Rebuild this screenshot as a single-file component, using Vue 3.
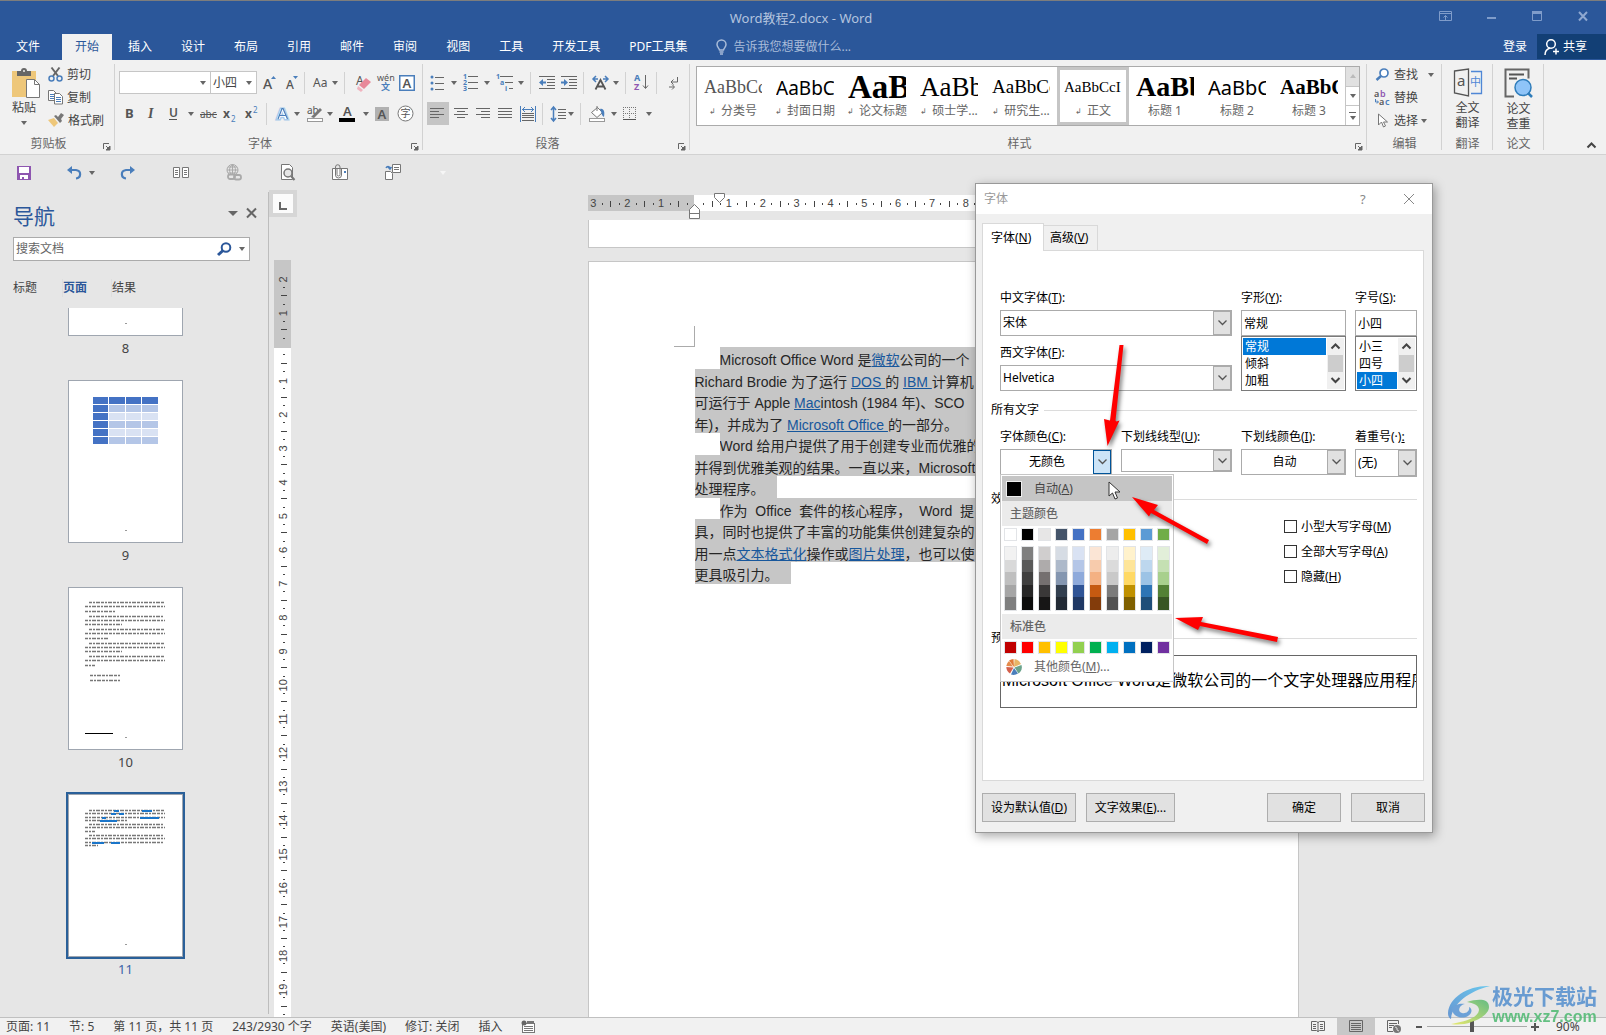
<script setup>
import { h, ref } from 'vue'

const G = '#666'
const B = '#4a7ebb'
const ln = (d, c = G, w = 1) => `<path d="${d}" fill="none" stroke="${c}" stroke-width="${w}"/>`
const tx = (x, y, s, t, extra = '') =>
  `<text x="${x}" y="${y}" font-size="${s}" font-family="Noto Sans,Noto Sans CJK SC,sans-serif" fill="#555" ${extra}>${t}</text>`

const icons = {
  paste: [29, 31, `<rect x="0" y="3" width="24" height="26" fill="#eec77a"/><path d="M5 3h4a3 3 0 0 1 6 0h4v5H5z" fill="#666"/><circle cx="12" cy="3" r="1" fill="#eee"/><path d="M14.500 11.500h8l5 5v13h-13z" fill="#fff" stroke="#777"/>${ln('M22.500 11.500v5h5', '#777')}`],
  cut: [15, 15, `${ln('M3.500 0.500L10 9M11.500 0.500L5 9', '#666', 2)}<circle cx="3.500" cy="11.500" r="2.500" fill="none" stroke="${B}" stroke-width="1.500"/><circle cx="11.500" cy="11.500" r="2.500" fill="none" stroke="${B}" stroke-width="1.500"/>`],
  copy: [15, 15, `<path d="M.5.500h5l3 3v7h-8z" fill="#fff" stroke="#777"/>${ln('M2 4.500h4M2 6.500h4M2 8.500h4', B)}<path d="M6.500 3.500h5l3 3v7.500h-8z" fill="#fff" stroke="#777"/>${ln('M8 7.500h5M8 9.500h5M8 11.500h5', B)}`],
  brush: [16, 15, `<path d="M0 7l6-2 4 5-4 4z" fill="#eec77a"/><path d="M6 3l2-1 2 2 3-4 3 2-3 4 1 2-2 2z" fill="#777"/>`],
  growA: [14, 16, `${tx(1, 14, 14, 'A', 'font-weight="500"')}<path d="M9 4l2.500-3L14 4z" fill="${B}"/>`],
  shrinkA: [14, 16, `${tx(1, 14, 12, 'A', 'font-weight="500"')}<path d="M8 1l2.500 3L13 1z" fill="${B}"/>`],
  aa: [16, 16, tx(0, 12, 12, 'Aa')],
  eraser: [18, 18, `${tx(3, 11, 12, 'A')}<path d="M6 11l7-7 5 4-7 7z" fill="#e8899a"/><path d="M5 12l5 4-2 2-4-3z" fill="#f1b4bf"/>`],
  wen: [17, 17, `${tx(0, 7, 9, 'wén')}<text x="4" y="16" font-size="9" font-weight="700" font-family="Noto Sans CJK SC,sans-serif" fill="${B}">文</text>`],
  boxA: [16, 16, `<rect x=".75" y=".75" width="14.500" height="14.500" fill="#fff" stroke="${B}" stroke-width="1.500"/>${tx(3.5, 13, 13, 'A', 'font-weight="600"')}`],
  bold: [14, 16, tx(3, 12, 13, 'B', 'font-weight="700"')],
  italic: [14, 16, `<text x="4" y="12" font-size="14" font-family="Liberation Serif,serif" font-style="italic" font-weight="700" fill="#555">I</text>`],
  underline: [14, 16, `${tx(3, 11, 12, 'U', 'font-weight="600"')}${ln('M3 13.500h8', '#555')}`],
  strike: [17, 16, `${tx(0, 12, 10, 'abc')}${ln('M0 8.500h17', '#555')}`],
  sub: [14, 16, `${tx(1, 12, 12, 'x', 'font-weight="700"')}<text x="9" y="16" font-size="8" font-family="Noto Sans,sans-serif" fill="${B}">2</text>`],
  sup: [14, 16, `${tx(1, 12, 12, 'x', 'font-weight="700"')}<text x="9" y="7" font-size="8" font-family="Noto Sans,sans-serif" fill="${B}">2</text>`],
  glowA: [15, 16, `<text x="2" y="13" font-size="15" font-weight="700" font-family="Noto Sans,sans-serif" fill="#fff" stroke="#a9cbea" stroke-width="3" paint-order="stroke">A</text><path d="M3 13L7 2.500h1L12.500 13M4.500 9.500h6" fill="none" stroke="${B}" stroke-width="1.200"/>`],
  highlight: [18, 18, `${tx(1, 9, 10, 'ab')}<path d="M5 12l9-9 2 2-8 8z" fill="#777"/><rect x="1.500" y="13.500" width="15" height="3" fill="#fff" stroke="#999"/>`],
  colorA: [17, 18, `${tx(4, 11, 13, 'A', 'font-weight="600"')}<rect x="0" y="13" width="16" height="4" fill="#000"/>`],
  shadeA: [14, 16, `<rect x="0" y="1" width="14" height="14" fill="#b1b1b1"/>${tx(2.5, 13, 13, 'A', 'font-weight="600"')}`],
  circleZi: [17, 17, `<circle cx="8.500" cy="8.500" r="7.500" fill="#fff" stroke="#777"/><text x="3.500" y="12" font-size="10" font-family="Noto Sans CJK SC,sans-serif" fill="#555">字</text>`],
  bullets: [14, 16, `<circle cx="2" cy="2" r="1.500" fill="${B}"/><circle cx="2" cy="8" r="1.500" fill="${B}"/><circle cx="2" cy="14" r="1.500" fill="${B}"/>${ln('M5 2.500h9M5 8.500h9M5 14.500h9')}`],
  numbers: [15, 17, `<g font-size="7" font-weight="700" font-family="Noto Sans,sans-serif" fill="${B}"><text x="0" y="5">1</text><text x="0" y="11">2</text><text x="0" y="17">3</text></g>${ln('M5 2.500h10M5 8.500h10M5 14.500h10')}`],
  multi: [17, 17, `<g font-size="7" font-weight="700" font-family="Noto Sans,sans-serif" fill="${B}"><text x="0" y="5">1</text><text x="4" y="11">a</text><text x="9" y="17">i</text></g>${ln('M4 2.500h13M9 8.500h8M13 14.500h4')}`],
  outdent: [16, 15, `${ln('M0 1.500h16M8 4.500h8M8 7.500h8M8 10.500h8M0 13.500h16')}<path d="M0 7.500l4-3.500v2.500h3v2H4V11z" fill="${B}"/>`],
  indent: [16, 15, `${ln('M0 1.500h16M8 4.500h8M8 7.500h8M8 10.500h8M0 13.500h16')}<path d="M7 7.500L3 4v2.500H0v2h3V11z" fill="${B}"/>`],
  scaleA: [17, 16, `${ln('M3.500 14.500L8.500 5l5 9.500M5.500 11.500h6', '#555', 1.800)}${ln('M1 4h5M4 1L1 4l3 3M16 4h-5M13 1l3 3-3 3', B, 1.5)}`],
  sort: [15, 17, `<text x="0" y="7" font-size="9" font-weight="700" font-family="Noto Sans,sans-serif" fill="${B}">A</text><text x="0" y="16" font-size="9" font-weight="700" font-family="Noto Sans,sans-serif" fill="#8e56b0">Z</text>${ln('M11.500 1v13M9 11.500l2.500 3 2.500-3')}`],
  marks: [14, 16, `${ln('M12.500 2v5H6M8.500 4.500L6 7l2.500 2.500M4 12h5M7 9.500L9.500 12 7 14.500')}`],
  left: [14, 13, ln('M0 1.500h14M0 4.500h9M0 7.500h14M0 10.500h9')],
  center: [14, 13, ln('M0 1.500h14M3 4.500h8M0 7.500h14M3 10.500h8')],
  right: [14, 13, ln('M0 1.500h14M5 4.500h9M0 7.500h14M5 10.500h9')],
  justify: [14, 13, ln('M0 1.500h14M0 4.500h14M0 7.500h14M0 10.500h14')],
  distribute: [16, 16, `${ln('M.5 0v16M15.500 0v16', B)}${ln('M2 3.500h12M5 1L2.500 3.500 5 6M11 1l2.500 2.500L11 6', B)}${ln('M2 7.500h12M2 9.500h12M2 11.500h12M2 14.500h12')}`],
  spacing: [15, 16, `${ln('M2.500 1v14M0 4l2.500-3L5 4M0 12l2.500 3L5 12', B, 1.5)}${ln('M7 3.500h8M7 6.500h8M7 9.500h8M7 12.500h8')}`],
  bucket: [17, 17, `<path d="M2.500 7.500l6-5 5 5-5.500 5z" fill="#fff" stroke="#777"/>${ln('M8 1v5', '#777')}<path d="M11 4c4-1 5 3 4 8-3-2-2-4-3-5z" fill="${B}"/><rect x=".5" y="13.500" width="15" height="3" fill="#fff" stroke="#999"/>`],
  borders: [14, 14, `<path d="M.5 0v13M6.500 0v13M12.500 0v13M0 .5h13M0 6.500h13" fill="none" stroke="#777" stroke-dasharray="1 1"/>${ln('M0 12.500h13', '#555')}`],
  find: [14, 13, `<circle cx="8.500" cy="5" r="4" fill="#fff" stroke="${B}" stroke-width="1.700"/>${ln('M5.500 8L1 12', B, 2.5)}`],
  replace: [17, 16, `${tx(0, 7, 9, 'a', 'font-weight="600"')}<text x="6" y="7" font-size="9" font-weight="600" font-family="Noto Sans,sans-serif" fill="#8e56b0">b</text>${tx(5, 15, 9, 'a', 'font-weight="600"')}<text x="11" y="15" font-size="9" font-weight="600" font-family="Noto Sans,sans-serif" fill="${B}">c</text>${ln('M1.500 9v3H4M3 10.500L4.500 12 3 13.500', B)}`],
  select: [12, 15, `<path d="M2 1v11l3-3 2 5 2-1-2-4h4z" fill="#fff" stroke="#777"/>`],
  translate: [29, 29, `<path d="M1.500 3L15.500 1v27L1.500 25z" fill="none" stroke="#555" stroke-width="1.300"/><text x="4" y="18" font-size="15" font-family="Noto Sans,sans-serif" fill="#555">a</text>${ln('M18 3.500h10.500v22H18', '#4f87d6', 1.3)}<text x="17" y="18" font-size="11" font-family="Noto Sans CJK SC,sans-serif" fill="#4f87d6">中</text>`],
  thesis: [29, 30, `<path d="M10 28.500H1.500V1.500h23v9" fill="none" stroke="#666" stroke-width="2"/>${ln('M5 6.500h15M5 10.500h8', '#555', 2)}<circle cx="19" cy="19.500" r="8" fill="#8fc4f8" stroke="#2e7cba" stroke-width="1.500"/>${ln('M24 25l4 4', '#2e7cba', 2.5)}`],
  launcher: [8, 8, `${ln('M.5 6V.5H6')}<path d="M7 3v4H3zM3 3l3 3" fill="${G}" stroke="${G}"/>`],
  save: [14, 14, `<path d="M0 0h14v14H0z" fill="#8e56b0"/><path d="M2 1h10v6H2zM3 9h8v4H3z" fill="#fff"/><path d="M5 11h2v2H5z" fill="#8e56b0"/>`],
  undo: [15, 14, `${ln('M3 4h6c6 1 5 8 0 8.500', B, 2.2)}<path d="M0 4l5-4v8z" fill="${B}"/>`],
  redo: [15, 14, `${ln('M12 4H6C0 5 1 12 6 12.500', B, 2.2)}<path d="M15 4l-5-4v8z" fill="${B}"/>`],
  pages: [17, 12, `<path d="M.5.500h6v10h-6zM9.500.500h6v10h-6z" fill="#fff" stroke="#777"/>${ln('M2 3.500h3M2 5.500h3M2 7.500h3M11 3.500h3M11 5.500h3M11 7.500h3', '#777')}`],
  globe: [16, 17, `<circle cx="6.500" cy="6" r="5.500" fill="none" stroke="#aaa"/>${ln('M1 6h11M6.500.500v11M2 3h9M2 9h9', '#aaa')}<path d="M6.500.500c-4 3-4 8 0 11M6.500.500c4 3 4 8 0 11" fill="none" stroke="#aaa"/><rect x="2" y="10.500" width="7" height="4.500" rx="2" fill="#e6e6e6" stroke="#aaa" stroke-width="1.800"/><rect x="8" y="11" width="7" height="4.500" rx="2" fill="none" stroke="#aaa" stroke-width="1.800"/>`],
  preview: [16, 17, `<path d="M2.500.500h8l3 3v12h-11z" fill="#fff" stroke="#777"/><circle cx="9" cy="9" r="4" fill="#e6e6e6" stroke="#777" stroke-width="1.500"/>${ln('M12 12l3.500 4', '#777', 2)}`],
  attach: [17, 15, `<path d="M.5 3.500h15v11H.500z" fill="#fff" stroke="#777"/><rect x="12" y="6" width="2" height="2" fill="${B}"/><path d="M5 3v6.500a1.500 1.500 0 0 0 3 0V2a2 2 0 0 0-4.500 0v8a3 3 0 0 0 6 0V3" fill="none" stroke="#777"/>`],
  compare: [17, 17, `<path d="M.5 7.500h5l2 2v6h-7zM7.500.500h8v8h-8z" fill="#fff" stroke="#777"/>${ln('M9 3.500h5M9 5.500h5', '#777')}${ln('M1 4c1-2 3-2 4 0M3 3l2 2 1.500-2', B, 1.5)}`],
  bulb: [11, 15, `<path d="M3.500 10C3 8 1 7 1 4.500a4.500 4.500 0 0 1 9 0C10 7 8 8 7.500 10z" fill="none" stroke="#a9bcd9" stroke-width="1.500"/>${ln('M3.500 12h4M4 14h3', '#a9bcd9', 1.5)}`],
  person: [16, 16, `<circle cx="7" cy="5" r="4.300" fill="none" stroke="#fff" stroke-width="1.500"/>${ln('M1 16c0-4 2-6 5-7M9 12.500h6M12 9.500v6', '#fff', 1.5)}`],
  ribbonOpt: [13, 11, `${ln('M.5.500h12v9H.500zM1 2.500h11M6.500 9V4.500M4.500 6.500l2-2 2 2', '#7f9cca')}`],
  min: [9, 11, ln('M0 7h9', '#7f9cca', 2)],
  max: [10, 11, `${ln('M.5 1h9v8.500h-9z', '#7f9cca')}${ln('M0 1.500h10', '#7f9cca', 3)}`],
  close: [10, 11, ln('M1 1l8 8.500M9 1L1 9.500', '#8fa8d0', 2)],
  search: [15, 14, `<circle cx="9" cy="5.500" r="4.300" fill="none" stroke="#2b579a" stroke-width="2"/>${ln('M6 8.500l-5 4.500', '#2b579a', 3)}`],
  navClose: [11, 10, ln('M1 .5l9 9M10 .5l-9 9', '#666', 2)],
  macro: [14, 13, `<rect x="1.500" y="3.500" width="12" height="9" fill="#fff" stroke="#777"/>${ln('M3 6.500h9M3 8.500h9M3 10.500h9', '#777')}<rect x="6" y="1" width="7" height="3" fill="#777"/><circle cx="3" cy="3" r="2.500" fill="#666"/>`],
  read: [14, 13, `${ln('M.5 1.500h5l1.500 1 1.500-1h5v9h-5l-1.500 1-1.500-1h-5zM7 2v10')}${ln('M2 4.500h3M2 6.500h3M2 8.500h3M9 4.500h3M9 6.500h3M9 8.500h3')}`],
  print: [14, 13, `${ln('M.5.500h13v11H.500zM2 3.500h10M2 5.500h10M2 7.500h10M2 9.500h10')}`],
  web: [14, 13, `${ln('M6 11.500H.500v-11h11V4M2 3.500h8M2 5.500h5M2 7.500h3')}<circle cx="10" cy="9" r="4" fill="#777"/>${ln('M8 7l2 1v2l2 1', '#ddd')}`],
  help: [10, 14, `<text x="1" y="12" font-size="13" font-family="Noto Sans,sans-serif" fill="#888">?</text>`],
  dlgClose: [12, 12, ln('M1 1l10 10M11 1L1 11', '#888')],
  chev: [9, 6, ln('M.5.500l4 4 4-4', '#555', 1.3)],
  up: [9, 7, ln('M.5 5.500l4-4 4 4', '#444', 2)],
  down: [9, 7, ln('M.5 1l4 4 4-4', '#444', 2)],
  wheel: [16, 16, `<path d="M8 8L3 1.500A8 8 0 0 1 7.500 0z" fill="#e07b39"/><path d="M8 8L8.500 0A8 8 0 0 1 15 5z" fill="#e8b566"/><path d="M8.500 8.500L15.500 6a8 8 0 0 1-3 8.500z" fill="#6aa38c"/><path d="M8 9l4 5.500a8 8 0 0 1-7 1z" fill="#4a7ebb"/><path d="M7.500 8.500L4 14.500A8 8 0 0 1 .3 8z" fill="#d4604c"/><path d="M7 7.500L.3 7A8 8 0 0 1 3 2z" fill="#e58a4a"/>`],
  pointer: [13, 20, `<path d="M1 1v14l3.500-3 2.500 6 2.500-1-2.500-6H12z" fill="#fff" stroke="#333"/>`],
}
const Ic = (p) => {
  const [w, hh, m] = icons[p.n]
  return h('svg', { width: w, height: hh, viewBox: `0 0 ${w} ${hh}`, 'aria-hidden': 'true', innerHTML: m })
}
Ic.props = ['n']

const tabs = ['插入', '设计', '布局', '引用', '邮件', '审阅', '视图', '工具', '开发工具', 'PDF工具集']
const sep = { sep: true }
const t = (i, w, a) => ({ i, w, a })
const font1 = [t('growA', 21), t('shrinkA', 17), sep, t('aa', 29, 1), sep, t('eraser', 22), t('wen', 20), t('boxA', 18)]
const font2 = [t('bold', 20), t('italic', 20), t('underline', 32, 1), t('strike', 20), t('sub', 20), t('sup', 20), sep, t('glowA', 29, 1), t('highlight', 31, 1), t('colorA', 34, 1), t('shadeA', 20), t('circleZi', 20)]
const para1 = [t('bullets', 31, 1), t('numbers', 31, 1), t('multi', 32, 1), sep, t('outdent', 20), t('indent', 20), sep, t('scaleA', 31, 1), sep, t('sort', 20), sep, t('marks', 24)]
const para2 = [{ ...t('left', 22), on: true }, t('center', 20), t('right', 20), t('justify', 20), t('distribute', 20), sep, t('spacing', 27, 1), sep, t('bucket', 32, 1), t('borders', 33, 1)]

const gallery = [
  { s: 'AaBbCc', n: '分类号', c: 'song', m: 1 },
  { s: 'AaBbCc', n: '封面日期', c: 'hei', m: 1 },
  { s: 'AaB', n: '论文标题', c: 'huge', m: 1 },
  { s: 'AaBb', n: '硕士学...', c: 'big', m: 1 },
  { s: 'AaBbCc', n: '研究生...', c: 'mid', m: 1 },
  { s: 'AaBbCcI', n: '正文', c: 'body', m: 1, on: 1 },
  { s: 'AaBb', n: '标题 1', c: 'h1' },
  { s: 'AaBbC', n: '标题 2', c: 'h2' },
  { s: 'AaBbC', n: '标题 3', c: 'h3' },
]
const qat = [['save', '保存'], ['undo', '撤消'], ['redo', '恢复'], ['pages', '多页'], ['globe', '超链接'], ['preview', '打印预览'], ['attach', '附件'], ['compare', '比较']]

const ticks = (from, to, origin, pitch) => {
  const out = []
  for (let q = from * 4; q <= to * 4; q++) {
    if (q === 0) continue
    const pos = origin + (q * pitch) / 4
    const kind = q % 4 === 0 ? 'n' : q % 2 === 0 ? 'l' : 'd'
    out.push({ pos, kind, v: Math.abs(q / 4) })
  }
  return out
}
const vTicks = ticks(-2, 19.75, 87, 33.83)
const hTicks = ticks(-3, 17, 107, 33.86)

const rows9 = [['', '', '', ''], ['', 'a', 'a', 'a'], ['', 'b', 'b', 'b'], ['', 'a', 'a', 'a'], ['', 'b', 'b', 'b'], ['', 'a', 'a', 'a']]
const tiny = (list) => list.map(([x, y, x2]) => ({ x, y, x2 }))
const lines10 = tiny([
  [21, 15, 97], [17, 19, 97], [17, 24, 47], [21, 29, 95], [17, 33, 97], [17, 37, 54], [21, 42, 97], [17, 46, 97], [17, 51, 41],
  [21, 56, 97], [17, 60, 97], [17, 64, 54], [21, 69, 97], [17, 73, 97], [17, 78, 27], [22, 88, 52], [22, 93, 52],
])
const lines11 = tiny([
  [21, 16, 97], [17, 19, 97], [17, 23, 97], [17, 26, 59], [21, 30, 95], [17, 33, 97], [17, 37, 27], [21, 41, 95], [17, 44, 97], [17, 48, 95], [17, 51, 30],
])
const links11 = tiny([[46, 16, 51], [74, 16, 84], [43, 19, 48], [51, 19, 56], [34, 23, 38], [72, 23, 91], [32, 26, 49], [24, 48, 36], [43, 48, 52]])

const theme = ['#ffffff', '#000000', '#e7e6e6', '#44546a', '#4472c4', '#ed7d31', '#a5a5a5', '#ffc000', '#5b9bd5', '#70ad47']
const shades = [
  ['#f2f2f2', '#d9d9d9', '#bfbfbf', '#a6a6a6', '#7f7f7f'],
  ['#7f7f7f', '#595959', '#3f3f3f', '#262626', '#0c0c0c'],
  ['#d0cece', '#aeabab', '#757070', '#3a3838', '#171616'],
  ['#d6dce4', '#adb9ca', '#8496b0', '#323f4f', '#222a35'],
  ['#d9e2f3', '#b4c6e7', '#8eaadb', '#2f5496', '#1f3864'],
  ['#fbe5d5', '#f7cbac', '#f4b183', '#c55a11', '#833c0b'],
  ['#ededed', '#dbdbdb', '#c9c9c9', '#7b7b7b', '#525252'],
  ['#fff2cc', '#fee599', '#ffd965', '#bf9000', '#7f6000'],
  ['#deebf6', '#bdd7ee', '#9cc3e5', '#2e75b5', '#1e4e79'],
  ['#e2efd9', '#c5e0b3', '#a8d08d', '#538135', '#375623'],
]
const standard = ['#c00000', '#ff0000', '#ffc000', '#ffff00', '#92d050', '#00b050', '#00b0f0', '#0070c0', '#002060', '#7030a0']
const checks = [['小型大写字母', 'M'], ['全部大写字母', 'A'], ['隐藏', 'H']]
const zoom = ref(90)
</script>

<template>
  <div class="app">
    <header class="top">
      <div class="titlebar">
        <span class="title">Word教程2.docx - Word</span>
        <div class="winbtns">
          <button aria-label="功能区显示选项"><Ic n="ribbonOpt" /></button>
          <button aria-label="最小化"><Ic n="min" /></button>
          <button aria-label="最大化"><Ic n="max" /></button>
          <button aria-label="关闭"><Ic n="close" /></button>
        </div>
      </div>
      <nav class="tabs">
        <button class="file">文件</button>
        <button class="active">开始</button>
        <button v-for="x in tabs" :key="x">{{ x }}</button>
        <button class="tell"><Ic n="bulb" />告诉我您想要做什么...</button>
        <span class="grow"></span>
        <button class="login">登录</button>
        <button class="share"><Ic n="person" />共享</button>
      </nav>
    </header>

    <section class="ribbon">
      <div class="group clip">
        <div class="content">
          <button class="paste"><Ic n="paste" /><span>粘贴</span><i class="arr"></i></button>
          <div class="stack">
            <button><Ic n="cut" />剪切</button>
            <button><Ic n="copy" />复制</button>
            <button><Ic n="brush" />格式刷</button>
          </div>
        </div>
        <div class="label"><span>剪贴板</span><Ic n="launcher" /></div>
      </div>

      <div class="group fontg">
        <div class="content rows">
          <div class="row">
            <button class="combo wide" aria-label="字体"><i class="arr"></i></button>
            <button class="combo" aria-label="字号">小四<i class="arr"></i></button>
            <template v-for="(x, k) in font1" :key="k">
              <i v-if="x.sep" class="vsep"></i>
              <button v-else class="tool" :style="{ width: x.w + 'px' }" :aria-label="x.i"><Ic :n="x.i" /><i v-if="x.a" class="arr"></i></button>
            </template>
          </div>
          <div class="row">
            <template v-for="(x, k) in font2" :key="k">
              <i v-if="x.sep" class="vsep"></i>
              <button v-else class="tool" :style="{ width: x.w + 'px' }" :aria-label="x.i"><Ic :n="x.i" /><i v-if="x.a" class="arr"></i></button>
            </template>
          </div>
        </div>
        <div class="label"><span>字体</span><Ic n="launcher" /></div>
      </div>

      <div class="group parag">
        <div class="content rows">
          <div v-for="(r, j) in [para1, para2]" :key="j" class="row">
            <template v-for="(x, k) in r" :key="k">
              <i v-if="x.sep" class="vsep"></i>
              <button v-else class="tool" :class="{ on: x.on }" :style="{ width: x.w + 'px' }" :aria-label="x.i"><Ic :n="x.i" /><i v-if="x.a" class="arr"></i></button>
            </template>
          </div>
        </div>
        <div class="label"><span>段落</span><Ic n="launcher" /></div>
      </div>

      <div class="group styles">
        <div class="content">
          <div class="gallery">
            <button v-for="g in gallery" :key="g.n" class="style" :class="{ on: g.on }">
              <span class="sample" :class="g.c">{{ g.s }}</span>
              <span class="sname"><small v-if="g.m">↲</small>{{ g.n }}</span>
            </button>
            <div class="gscroll">
              <button class="dis" aria-label="上一行"><i class="arr upw"></i></button>
              <button aria-label="下一行"><i class="arr"></i></button>
              <button class="more" aria-label="其他"><i class="arr"></i></button>
            </div>
          </div>
        </div>
        <div class="label"><span>样式</span><Ic n="launcher" /></div>
      </div>

      <div class="group edit">
        <div class="content">
          <div class="stack">
            <button><Ic n="find" />查找<i class="arr far"></i></button>
            <button><Ic n="replace" />替换</button>
            <button><Ic n="select" />选择<i class="arr"></i></button>
          </div>
        </div>
        <div class="label"><span>编辑</span></div>
      </div>
      <div class="group one">
        <div class="content"><button class="bigbtn"><Ic n="translate" /><span>全文<br />翻译</span></button></div>
        <div class="label"><span>翻译</span></div>
      </div>
      <div class="group one">
        <div class="content"><button class="bigbtn"><Ic n="thesis" /><span>论文<br />查重</span></button></div>
        <div class="label"><span>论文</span></div>
      </div>
      <div class="tail"><button aria-label="折叠功能区"><Ic n="up" /></button></div>
    </section>

    <div class="qat">
      <button v-for="q in qat" :key="q[0]" :aria-label="q[1]"><Ic :n="q[0]" /><i v-if="q[0] === 'undo'" class="arr"></i></button>
      <button class="custom" aria-label="自定义"><i class="arr"></i></button>
    </div>

    <main class="work">
      <aside class="nav">
        <div class="navhead"><h1>导航</h1><i class="arr big"></i><button aria-label="关闭导航"><Ic n="navClose" /></button></div>
        <div class="search"><input type="text" placeholder="搜索文档" aria-label="搜索文档" /><Ic n="search" /><i class="arr"></i></div>
        <div class="navtabs"><button>标题</button><button class="cur">页面</button><button>结果</button></div>
        <div class="thumbs">
          <figure>
            <div class="thumb cut"><i class="dot"></i></div>
            <figcaption>8</figcaption>
          </figure>
          <figure>
            <div class="thumb">
              <div class="mini"><template v-for="(r, i) in rows9" :key="i"><b v-for="(c, j) in r" :key="j" :class="c"></b></template></div>
              <i class="dot"></i>
            </div>
            <figcaption>9</figcaption>
          </figure>
          <figure>
            <div class="thumb">
              <svg width="113" height="161">
                <line v-for="(l, i) in lines10" :key="i" :x1="l.x - 1" :x2="l.x2 - 1" :y1="l.y - .5" :y2="l.y - .5" class="tinyline" />
                <path d="M16 145.500h28" stroke="#000" />
              </svg>
              <i class="dot"></i>
            </div>
            <figcaption>10</figcaption>
          </figure>
          <figure class="sel">
            <div class="thumb">
              <svg width="113" height="161">
                <line v-for="(l, i) in lines11" :key="i" :x1="l.x - 1" :x2="l.x2 - 1" :y1="l.y - .5" :y2="l.y - .5" class="tinyline" />
                <line v-for="(l, i) in links11" :key="'k' + i" :x1="l.x - 1" :x2="l.x2 - 1" :y1="l.y" :y2="l.y" stroke="#1a75c9" stroke-width="2" />
              </svg>
              <i class="dot"></i>
            </div>
            <figcaption>11</figcaption>
          </figure>
        </div>
      </aside>

      <div class="gutter">
        <button class="corner" aria-label="制表符"><i></i></button>
        <div class="vruler">
          <svg width="17" height="757">
            <rect width="17" height="88" fill="#c6c6c6" />
            <template v-for="(k, i) in vTicks" :key="i">
              <text v-if="k.kind === 'n'" class="rnum" text-anchor="middle" :transform="`translate(13 ${k.pos}) rotate(-90)`">{{ k.v }}</text>
              <rect v-else-if="k.kind === 'l'" x="7" :y="Math.round(k.pos) - 1" width="6" height="1" fill="#444" />
              <rect v-else x="9" :y="Math.round(k.pos) - 1" width="2" height="1" fill="#444" />
            </template>
          </svg>
        </div>
      </div>

      <div class="canvas">
        <div class="sheet">
          <div class="hruler">
            <svg width="711" height="26">
              <rect y="2" width="711" height="16" fill="#fff" />
              <rect y="2" width="106" height="16" fill="#c6c6c6" />
              <template v-for="(k, i) in hTicks" :key="i">
                <text v-if="k.kind === 'n'" class="rnum" text-anchor="middle" :x="k.pos" y="14">{{ k.v }}</text>
                <rect v-else-if="k.kind === 'l'" :x="Math.round(k.pos)" y="8" width="1" height="6" fill="#444" />
                <rect v-else :x="Math.round(k.pos)" y="10" width="1" height="2" fill="#444" />
              </template>
              <path d="M126.500.500h10v4l-5 5-5-5z" fill="#fff" stroke="#777" />
              <path d="M101.500 25.500v-9l5-5 5 5v9zM101.500 20.500h10" fill="#fff" stroke="#777" />
            </svg>
          </div>
          <div class="page prev"></div>
          <article class="page">
            <div class="bracket"></div>
            <div class="text">
              <p class="ind"><span class="full">Microsoft Office Word 是<a href="#">微软</a>公司的一个</span></p>
              <p><span class="full">Richard Brodie 为了运行 <a href="#">DOS </a>的 <a href="#">IBM </a>计算机</span></p>
              <p><span class="full">可运行于 Apple <a href="#">Mac</a>intosh (1984 年)、SCO</span></p>
              <p><span class="full">年)，并成为了 <a href="#">Microsoft Office </a>的一部分。</span></p>
              <p class="ind"><span class="full">Word 给用户提供了用于创建专业而优雅的</span></p>
              <p><span class="full">并得到优雅美观的结果。一直以来，Microsoft</span></p>
              <p><span>处理程序。</span></p>
              <p class="ind"><span class="full">作为&nbsp; Office&nbsp; 套件的核心程序，&nbsp; Word&nbsp; 提</span></p>
              <p><span class="full">具，同时也提供了丰富的功能集供创建复杂的</span></p>
              <p><span class="full">用一点<a href="#">文本格式化</a>操作或<a href="#">图片处理</a>，也可以使</span></p>
              <p><span>更具吸引力。</span></p>
            </div>
          </article>
        </div>
      </div>
    </main>

    <footer class="status">
      <span>页面: 11</span><span>节: 5</span><span>第 11 页，共 11 页</span><span>243/2930 个字</span><span>英语(美国)</span><span>修订: 关闭</span><span>插入</span><Ic n="macro" />
      <span class="grow"></span>
      <button class="view" aria-label="阅读视图"><Ic n="read" /></button>
      <button class="view cur" aria-label="页面视图"><Ic n="print" /></button>
      <button class="view" aria-label="Web 版式"><Ic n="web" /></button>
      <button class="pm" aria-label="缩小"><i></i></button>
      <input v-model="zoom" type="range" min="10" max="190" aria-label="缩放" />
      <button class="pm plus" aria-label="放大"><i></i></button>
      <span class="pct">{{ zoom }}%</span>
    </footer>

    <div class="dialog" role="dialog" aria-label="字体">
      <div class="dtitle"><span>字体</span><button aria-label="帮助"><Ic n="help" /></button><button aria-label="关闭对话框"><Ic n="dlgClose" /></button></div>
      <div class="dtabs"><button class="cur">字体(<u>N</u>)</button><button>高级(<u>V</u>)</button></div>
      <div class="panel">
        <div class="grid3">
          <div class="col">
            <label for="cn">中文字体(<u>T</u>):</label>
            <div class="sel-wrap"><select id="cn"><option>宋体</option></select><span class="drop"><Ic n="chev" /></span></div>
            <label for="en" class="second">西文字体(<u>F</u>):</label>
            <div class="sel-wrap"><select id="en"><option>Helvetica</option></select><span class="drop"><Ic n="chev" /></span></div>
          </div>
          <div class="col">
            <label for="st">字形(<u>Y</u>):</label>
            <input id="st" type="text" value="常规" />
            <div class="list"><ul role="listbox" aria-label="字形"><li class="cur" role="option">常规</li><li role="option">倾斜</li><li role="option">加粗</li></ul><div class="sb"><Ic n="up" /><i></i><Ic n="down" /></div></div>
          </div>
          <div class="col">
            <label for="sz">字号(<u>S</u>):</label>
            <input id="sz" type="text" value="小四" />
            <div class="list"><ul role="listbox" aria-label="字号"><li role="option">小三</li><li role="option">四号</li><li class="cur" role="option">小四</li></ul><div class="sb"><Ic n="up" /><i></i><Ic n="down" /></div></div>
          </div>
        </div>
        <div class="rule">所有文字</div>
        <div class="grid4">
          <div class="col"><label for="fc">字体颜色(<u>C</u>):</label>
            <div class="sel-wrap hot"><select id="fc" class="mid"><option>无颜色</option></select><span class="drop"><Ic n="chev" /></span></div></div>
          <div class="col"><label for="ul">下划线线型(<u>U</u>):</label>
            <div class="sel-wrap short"><select id="ul"><option></option></select><span class="drop"><Ic n="chev" /></span></div></div>
          <div class="col"><label for="uc">下划线颜色(<u>I</u>):</label>
            <div class="sel-wrap"><select id="uc" class="mid"><option>自动</option></select><span class="drop"><Ic n="chev" /></span></div></div>
          <div class="col"><label for="em">着重号(·)<u>:</u></label>
            <div class="sel-wrap tall"><select id="em"><option>(无)</option></select><span class="drop"><Ic n="chev" /></span></div></div>
        </div>
        <div class="rule fx">效果</div>
        <div class="checks">
          <label v-for="c in checks" :key="c[1]"><input type="checkbox" /><span>{{ c[0] }}(<u>{{ c[1] }}</u>)</span></label>
        </div>
        <div class="rule pv">预览</div>
        <div class="previewbox">Microsoft Office Word是微软公司的一个文字处理器应用程序</div>
      </div>
      <div class="dbtns">
        <button class="b1">设为默认值(<u>D</u>)</button><button class="b2">文字效果(<u>E</u>)...</button>
        <span class="grow"></span>
        <button>确定</button><button>取消</button>
      </div>

      <div class="menu">
        <button class="auto"><i></i><span>自动(<u>A</u>)</span></button>
        <div class="mhead">主题颜色</div>
        <div class="sw"><button v-for="c in theme" :key="c" :style="{ background: c }" :aria-label="c"></button></div>
        <div class="sh">
          <div v-for="(col, i) in shades" :key="i"><button v-for="(c, j) in col" :key="j" :style="{ background: c }" :aria-label="c"></button></div>
        </div>
        <div class="mhead">标准色</div>
        <div class="sw std"><button v-for="c in standard" :key="c" :style="{ background: c }" :aria-label="c"></button></div>
        <button class="morec"><Ic n="wheel" /><span>其他颜色(<u>M</u>)...</span></button>
      </div>

      <svg class="arrows" width="200" height="320" viewBox="1090 340 200 320" aria-hidden="true">
        <path d="M1119.500 345h4l-8 75.500 1 1 3-1-12 25.500-3.500-27 6 1.500z" />
        <path d="M1132 497l26 8-4 5 55 30-2 4-56-31-2 3.500z" />
        <path d="M1175 618l28-1-2 5 77 15-1 5-77-16-2 4z" />
      </svg>
      <span class="cursor"><Ic n="pointer" /></span>
    </div>

    <div class="wm">
      <svg width="44" height="42" viewBox="0 0 44 42" aria-hidden="true">
        <defs>
          <linearGradient id="wa" x1="0" y1="1" x2="1" y2="0"><stop offset="0" stop-color="#5a8fd0" /><stop offset="1" stop-color="#5cc4ee" /></linearGradient>
          <linearGradient id="wb" x1="0" y1="1" x2="1" y2="0"><stop offset="0" stop-color="#e8e860" /><stop offset="1" stop-color="#58b878" /></linearGradient>
        </defs>
        <path d="M43 1C22 0 2 12 1 28c0 3 1 5 3 6 1-15 18-28 39-33z" fill="url(#wa)" />
        <path d="M5 25c2 8 11 9 16 6 5-3 4-8 1-9 1 4-3 7-7 6-5-1-3-8 3-9-6-1-13 1-13 6z" fill="#5f9ad6" />
        <path d="M20 17c10-3 22-4 22 5C42 32 20 42 4 39c10-2 27-5 28-14 0-5-6-7-12-8z" fill="url(#wb)" />
      </svg>
      <div><strong>极光下载站</strong><em>www.xz7.com</em></div>
    </div>
  </div>
</template>

<style>
html, body { margin: 0; height: 100%; overflow: hidden; }
#app { height: 100vh; }
</style>

<style scoped>
.app { position: relative; height: 100%; display: flex; flex-direction: column; overflow: hidden; background: #e6e6e6; font: 12px/16px "Noto Sans", "Noto Sans CJK SC", sans-serif; color: #444; }
.app *, .app *::before { box-sizing: border-box; }
button { font: inherit; color: inherit; border: 0; padding: 0; background: none; display: flex; align-items: center; white-space: pre; }
svg { display: block; flex: none; overflow: visible; }
.grow { flex: 1; }
.arr { flex: none; width: 0; height: 0; border: 3px solid transparent; border-top: 4px solid #666; border-bottom: 0; }
.arr.big { border-width: 5px 5px 0; }
.arr.upw { border-top: 0; border-bottom: 4px solid #bbb; }

.top { background: #2b579a; border-top: 1px solid #7d7d7d; height: 60px; flex: none; color: #fff; }
.titlebar { height: 33px; display: flex; align-items: center; justify-content: center; position: relative; }
.title { color: #b3c4df; font-size: 13px; padding-right: 4px; }
.winbtns { position: absolute; right: 18px; top: 10px; display: flex; gap: 36px; }
.winbtns button:first-child { margin-right: -1px; }
.tabs { display: flex; height: 26px; gap: 3px; }
.tabs button { padding: 0 13px; }
.tabs .file { padding: 0 22px 0 16px; margin-right: -3px; }
.tabs .active { background: #f1f1f1; color: #2b579a; }
.tabs .tell { gap: 6px; color: #a9bcd9; }
.tabs .login { padding: 0 9px 0 0; }
.tabs .share { background: #123f75; height: 25px; width: 69px; padding: 0 7px; gap: 3px; margin-left: -2px; }

.ribbon { display: flex; flex: none; background: #f1f1f1; height: 95px; border-bottom: 1px solid #d2d2d2; }
.group { display: flex; flex-direction: column; position: relative; flex: none; }
.group::after { content: ""; position: absolute; right: 0; top: 4px; bottom: 4px; width: 1px; background: #d2d2d2; }
.content { height: 73px; display: flex; }
.label { display: flex; height: 21px; padding: 1px 4px 0; align-items: center; color: #666; }
.label span { flex: 1; text-align: center; }
.label span:not(:last-child) { padding-right: 10px; }
.label svg { margin-top: 6px; }
.clip { width: 115px; }
.fontg { width: 308px; }
.parag { width: 267px; }
.styles { flex: 1; min-width: 0; }
.edit { width: 75px; }
.one { width: 51px; }
.tail { width: 62px; display: flex; align-items: flex-end; justify-content: flex-end; padding: 0 10px 5px; }
.paste { flex-direction: column; width: 48px; padding: 8px 0 0; gap: 1px; }
.paste svg { margin-left: 4px; }
.paste .arr { margin-top: 4px; }
.stack { display: flex; flex-direction: column; padding-top: 3px; }
.stack button { height: 23px; gap: 4px; }
.edit .stack { padding-left: 7px; }
.edit .stack svg { width: 17px; }
.edit .stack button { gap: 3px; }
.arr.far { margin-left: 7px; }
.rows { flex-direction: column; padding: 11px 4px 0; gap: 8px; }
.row { display: flex; height: 23px; gap: 2px; align-items: center; }
.tool { height: 23px; padding-left: 3px; }
.tool .arr { margin-left: auto; margin-right: 1px; }
.tool.on { background: #c5c5c5; }
.vsep { width: 1px; height: 22px; background: #d2d2d2; margin: 0 3px; }
.combo { width: 47px; height: 23px; background: #fff; border: 1px solid #c6c6c6; padding: 0 4px 0 2px; margin-left: -3px; }
.combo.wide { width: 92px; margin-left: 0; }
.combo .arr { margin-left: auto; }
.gallery { display: flex; flex: 1; min-width: 0; height: 60px; margin: 6px 7px 0 6px; background: #fff; border: 1px solid #ababab; overflow: hidden; }
.style { width: 72px; flex: none; flex-direction: column; height: 58px; padding: 5px 3px 0; border: 3px solid transparent; }
.style.on { border-color: #c5c5c5; }
.sample { display: block; width: 58px; height: 23px; line-height: 24px; overflow: hidden; color: #000; font-family: "Liberation Serif", serif; text-align: left; }
.song { font-size: 18px; color: #555; }
.hei { font: 19px/26px "Noto Sans", sans-serif; }
.huge { font-size: 33px; font-weight: 700; }
.big { font-size: 27px; }
.mid { font-size: 19px; }
.body { font-size: 15px; }
.h1 { font-size: 28px; font-weight: 700; }
.h2 { font: 20px/26px "Noto Sans", sans-serif; }
.h3 { font-size: 21px; font-weight: 700; }
.sname { margin-top: 5px; line-height: 16px; color: #666; display: flex; gap: 5px; }
.sname small { font-size: 8px; }
.gscroll { margin-left: auto; width: 15px; border-left: 1px solid #c6c6c6; display: flex; flex-direction: column; }
.gscroll button { flex: 1; justify-content: center; border-top: 1px solid #c6c6c6; }
.gscroll .dis { background: #e1e1e1; border: 0; }
.gscroll .more { flex-direction: column; gap: 3px; }
.gscroll .more::before { content: ""; width: 7px; height: 1px; background: #666; }
.bigbtn { flex: 1; flex-direction: column; padding-top: 8px; gap: 3px; line-height: 15px; }

.qat { display: flex; flex: none; height: 35px; padding-left: 17px; align-items: center; }
.qat button { width: 53px; }
.qat button:first-child { width: 50px; }
.qat .arr { margin-left: 7px; }
.qat .custom .arr { margin: 0 0 0 2px; border-top-color: #f6f6f6; }

.work { flex: 1; min-height: 0; display: flex; }
.nav { width: 269px; flex: none; border-right: 1px solid #bdbdbd; margin: 2px 0 3px; display: flex; flex-direction: column; min-height: 0; }
.navhead { display: flex; align-items: center; height: 45px; padding: 3px 11px 0 13px; }
.navhead h1 { flex: 1; margin: 0; font-size: 21px; line-height: 28px; font-weight: 400; color: #2b579a; }
.navhead .arr, .navhead button { margin: -6px 0 0 8px; }
.search { display: flex; align-items: center; height: 24px; width: 237px; margin-left: 13px; background: #fff; border: 1px solid #ababab; padding: 0 4px 0 2px; flex: none; }
.search input { flex: 1; min-width: 0; border: 0; padding: 0; outline: 0; font: inherit; }
.search input::placeholder { color: #666; opacity: 1; }
.search .arr { margin-left: 7px; }
.navtabs { display: flex; margin: 18px 0 0 13px; flex: none; }
.navtabs button { width: 49px; height: 18px; }
.navtabs button + button { border-left: 1px solid #dedede; }
.navtabs .cur { color: #2b579a; font-weight: 700; }
.thumbs { flex: 1; min-height: 0; overflow: hidden; margin-top: 11px; display: flex; flex-direction: column; align-items: center; padding-right: 17px; }
figure { margin: 0 0 19px; flex: none; text-align: center; }
figcaption { padding-top: 4px; line-height: 16px; margin-bottom: 5px; font-size: 13px; }
.thumb { width: 115px; height: 163px; background: #fff; border: 1px solid #9fa6b0; position: relative; }
.thumb.cut { height: 28px; border-top: 0; }
.tinyline { stroke: #777; stroke-width: 1.500; stroke-dasharray: 3 1 2 1 4 1; }
.dot { position: absolute; left: 56px; bottom: 11px; width: 2px; height: 1px; background: #999; }
.mini { display: grid; grid-template-columns: 15px 16px 15px 16px; gap: 1px; padding: 16px 0 0 24px; }
.mini b { height: 7px; background: #4472c4; }
.mini b.a { background: #b4c6e7; }
.mini b.b { background: #d9e2f3; }
.sel .thumb { outline: 2px solid #2a6099; }
.sel figcaption { color: #3a62a8; }

.gutter { width: 28px; flex: none; display: flex; flex-direction: column; }
.corner { width: 28px; height: 27px; background: #fbfbfb; border: 4px solid #d6d6d6; flex: none; justify-content: center; }
.corner i { width: 8px; height: 8px; border: 2px solid #666; border-width: 0 0 2px 2px; margin-top: 4px; }
.vruler { margin: 43px 6px 0 5px; background: #fff; flex: 1; min-height: 0; overflow: hidden; }
.rnum { font: 11px "Liberation Sans", sans-serif; fill: #444; }

.canvas { flex: 1; min-width: 0; padding: 3px 17px 0 0; display: flex; justify-content: center; }
.sheet { width: 711px; display: flex; flex-direction: column; flex: none; }
.hruler { height: 26px; flex: none; }
.page { background: #fff; border: 1px solid #c6c6c6; border-bottom: 0; flex: 1; min-height: 0; }
.page.prev { flex: none; height: 28px; margin: 1px 0 13px; border-width: 0 1px 1px; border-bottom: 1px solid #c6c6c6; }
.bracket { width: 21px; height: 21px; margin: 64px 0 0 85px; border: 1px solid #ababab; border-width: 0 1px 1px 0; }
.text { margin: 0 85px 0 106px; height: 237px; display: grid; grid-auto-rows: 1fr; font: 14px/26px "Liberation Sans", "Noto Sans CJK SC", sans-serif; color: #262626; overflow: hidden; }
.text p { margin: 0; display: flex; min-height: 0; white-space: pre; }
.text span { background: #c6c6c6; padding-right: 12px; }
.text .full { flex: 1; padding: 0; overflow: hidden; }
.text .ind { padding-left: 25px; }
.text a { color: #17579c; }

.status { flex: none; height: 18px; border-top: 1px solid #c0c0c0; background: #f1f1f1; display: flex; align-items: center; padding-left: 6px; gap: 19px; line-height: 17px; white-space: pre; }
.status .grow { margin-right: -19px; }
.view { width: 38px; height: 17px; justify-content: center; margin-right: -19px; }
.view.cur { background: #c8c8c8; }
.pm { width: 9px; height: 9px; position: relative; justify-content: center; margin-right: -15px; margin-left: 1px; }
.view:nth-last-of-type(3) { margin-right: -19px; }
.pm i { width: 6px; height: 2px; background: #555; }
.pm.plus { margin: 0 -2px 0 -16px; }
.pm.plus i { width: 8px; }
.pm.plus::after { content: ""; position: absolute; width: 2px; height: 8px; background: #555; }
.status input { width: 100px; height: 11px; margin: 0; appearance: none; background: linear-gradient(#aaa, #aaa) 0 5px / 100% 1px no-repeat; }
.status input::-webkit-slider-thumb { appearance: none; width: 4px; height: 11px; background: #555; }
.pct { width: 50px; }

.dialog { position: absolute; left: 975px; top: 183px; width: 458px; height: 650px; background: #f0f0f0; border: 1px solid #999; box-shadow: 2px 3px 10px rgba(0, 0, 0, .35); color: #000; display: flex; flex-direction: column; }
.dtitle { height: 30px; background: #fff; display: flex; align-items: center; padding: 0 17px 0 8px; color: #999; flex: none; }
.dtitle span { flex: 1; }
.dtitle button + button { margin-left: 34px; }
.dtabs { display: flex; align-items: flex-end; margin: 9px 0 0 6px; height: 27px; position: relative; flex: none; }
.dtabs button { height: 25px; border: 1px solid #d9d9d9; border-width: 1px 1px 0 0; width: 54px; padding-left: 6px; }
.dtabs .cur { height: 28px; margin-bottom: -1px; width: 62px; border-left-width: 1px; background: #fff; padding-left: 8px; }
.panel { margin: 0 8px 0 6px; height: 531px; background: #fff; border: 1px solid #d9d9d9; padding: 37px 6px 0 17px; flex: none; }
.col { display: flex; flex-direction: column; min-width: 0; }
.col label { height: 22px; line-height: 20px; white-space: nowrap; }
.col .second { margin-top: 7px; }
.grid3 { display: grid; grid-template-columns: 232px 105px 62px; gap: 9px; }
.grid4 { display: grid; grid-template-columns: 112px 111px 105px 62px; gap: 9px; margin-top: 7px; align-items: start; }
.col input { height: 26px; border: 1px solid #ababab; padding: 0 2px; font: inherit; width: 100%; outline: 0; }
.sel-wrap { display: flex; height: 26px; border: 1px solid #ababab; background: #fff; }
.sel-wrap.short { height: 23px; }
.sel-wrap.tall { height: 28px; }
select { appearance: none; flex: 1; min-width: 0; border: 0; padding: 0 2px; background: none; font: inherit; color: #000; outline: 0; }
select.mid { text-align: center; text-align-last: center; font-size: 12px; }
.drop { width: 18px; border: 1px solid #ababab; background: #e1e1e1; display: flex; align-items: center; justify-content: center; }
.hot .drop { background: #cce4f7; border-color: #005499; }
.list { height: 55px; border: 1px solid #7a7a7a; display: flex; padding: 1px; }
.list ul { margin: 0; padding: 0; list-style: none; flex: 1; }
.list li { height: 17px; line-height: 17px; padding-left: 2px; }
.list li.cur { background: #0078d7; color: #fff; }
.sb { width: 17px; background: #f0f0f0; display: flex; flex-direction: column; align-items: center; justify-content: space-between; padding: 5px 0; margin-left: 1px; }
.sb i { width: 15px; height: 17px; background: #cdcdcd; }
.rule { display: flex; align-items: center; gap: 5px; margin: 9px 0 0 -9px; height: 20px; }
.rule::after { content: ""; flex: 1; height: 1px; background: #dcdcdc; }
.fx { margin-top: 12px; }
.checks { display: flex; flex-direction: column; align-items: flex-start; padding: 5px 0 0 284px; }
.checks label { display: flex; align-items: center; height: 25px; gap: 4px; white-space: nowrap; }
.checks input { appearance: none; width: 13px; height: 13px; margin: 0; border: 1px solid #333; background: #fff; }
.pv { margin-top: 39px; }
.previewbox { margin-top: 7px; height: 53px; border: 1px solid #666; overflow: hidden; white-space: nowrap; font: 16px/49px "Liberation Sans", "Noto Sans CJK SC", sans-serif; padding-left: 1px; }
.dbtns { display: flex; margin: 12px 7px 0 6px; gap: 10px; }
.dbtns button { height: 29px; width: 74px; background: #e1e1e1; border: 1px solid #adadad; justify-content: center; }
.dbtns .b1 { width: 94px; }
.dbtns .b2 { width: 89px; }
.menu { position: absolute; left: 24px; top: 290px; width: 174px; height: 208px; background: #fff; border: 1px solid #c6c6c6; padding: 1px; color: #444; }
.menu .auto { width: 100%; height: 25px; background: #c5c5c5; padding-left: 4px; gap: 12px; }
.auto i { width: 16px; height: 16px; background: #000; border: 1px solid #eee; }
.mhead { height: 25px; line-height: 25px; background: #ebebeb; padding-left: 8px; color: #666; font-weight: 500; }
.sw { display: flex; gap: 4px; padding: 2px 0 0 2px; height: 20px; }
.sw button, .sh div { width: 13px; border: 1px solid #e2e4e7; }
.sw button { height: 13px; }
.sh { display: flex; gap: 4px; padding: 0 0 3px 2px; height: 68px; }
.sh div { display: flex; flex-direction: column; }
.sh button { flex: 1; width: 11px; }
.menu .std { height: 18px; }
.morec { gap: 12px; padding-left: 4px; height: 20px; color: #666; }
.arrows { position: absolute; left: 114px; top: 156px; fill: #f00; filter: drop-shadow(2px 3px 2px rgba(0, 0, 0, .5)); pointer-events: none; }
.cursor { position: absolute; left: 132px; top: 297px; }

.wm { position: absolute; right: 9px; bottom: 8px; display: flex; gap: 1px; align-items: center; opacity: .9; }
.wm div { display: flex; flex-direction: column; align-items: center; }
.wm strong { font-size: 21px; line-height: 22px; font-weight: 700; color: #5b93cf; }
.wm em { font: 16px/20px "Liberation Sans", sans-serif; color: #55bb77; font-weight: 700; }
</style>
